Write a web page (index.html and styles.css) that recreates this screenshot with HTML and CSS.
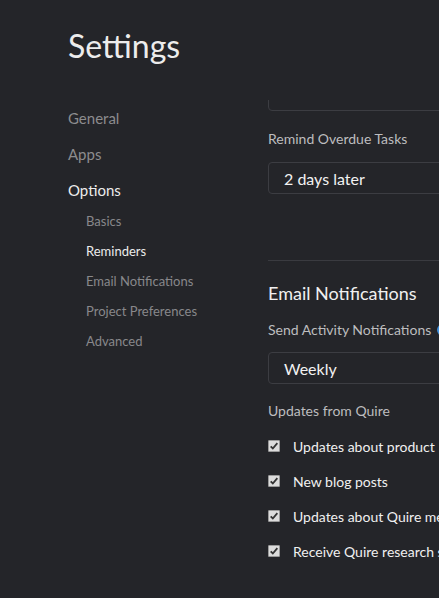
FILE: index.html
```html
<!DOCTYPE html>
<html lang="en">
<head>
<meta charset="utf-8">
<title>Settings</title>
<link rel="stylesheet" href="styles.css">
</head>
<body>
<header class="page-header">
  <h1 class="page-title">Settings</h1>
</header>
<div class="layout">
  <nav class="sidebar">
    <a class="nav-item">General</a>
    <a class="nav-item">Apps</a>
    <a class="nav-item is-active">Options</a>
    <div class="subnav">
      <a class="subnav-item">Basics</a>
      <a class="subnav-item is-active">Reminders</a>
      <a class="subnav-item">Email Notifications</a>
      <a class="subnav-item">Project Preferences</a>
      <a class="subnav-item">Advanced</a>
    </div>
  </nav>
  <main class="panel">
    <div class="panel-scroll">
      <div class="select select-first"><span class="select-value">Same day</span></div>

      <label class="field-label field-label-remind">Remind Overdue Tasks</label>
      <div class="select"><span class="select-value">2 days later</span></div>

      <hr class="divider">

      <h2 class="section-title">Email Notifications</h2>
      <label class="field-label field-label-send">Send Activity Notifications
        <svg class="info-icon" viewBox="0 0 12 12" width="12" height="12"><circle cx="6" cy="6" r="6" fill="#3f8fdc"/><rect x="5.2" y="5" width="1.6" height="4.2" fill="#242529"/><circle cx="6" cy="3.3" r="0.9" fill="#242529"/></svg>
      </label>
      <div class="select"><span class="select-value">Weekly</span></div>

      <div class="group-label">Updates from Quire</div>
      <ul class="check-list">
        <li class="check-row"><span class="checkbox"><svg viewBox="0 0 12 12" width="10" height="10"><path d="M2 6.4 L4.6 9 L10 2.6" fill="none" stroke="#333" stroke-width="2.2"/></svg></span><span class="check-text">Updates about product<span class="link">&amp; feature releases</span></span></li>
        <li class="check-row"><span class="checkbox"><svg viewBox="0 0 12 12" width="10" height="10"><path d="M2 6.4 L4.6 9 L10 2.6" fill="none" stroke="#333" stroke-width="2.2"/></svg></span><span class="check-text">New blog posts</span></li>
        <li class="check-row"><span class="checkbox"><svg viewBox="0 0 12 12" width="10" height="10"><path d="M2 6.4 L4.6 9 L10 2.6" fill="none" stroke="#333" stroke-width="2.2"/></svg></span><span class="check-text">Updates about Quire media coverage</span></li>
        <li class="check-row"><span class="checkbox"><svg viewBox="0 0 12 12" width="10" height="10"><path d="M2 6.4 L4.6 9 L10 2.6" fill="none" stroke="#333" stroke-width="2.2"/></svg></span><span class="check-text">Receive Quire research surveys</span></li>
      </ul>
    </div>
  </main>
</div>
</body>
</html>
```
FILE: styles.css
```css
html, body {
  margin: 0;
  padding: 0;
  height: 100%;
}

body {
  background: #242529;
  color: #e6e6e6;
  font-family: Lato, "Noto Sans", sans-serif;
  overflow: hidden;
  width: 439px;
}

.page-header {
  height: 100px;
  box-sizing: border-box;
  padding: 26px 0 0 68px;
}

.page-title {
  margin: 0;
  font-size: 32px;
  line-height: 40px;
  font-weight: 400;
  color: #ececec;
}

.layout {
  display: flex;
  height: 498px;
}

.sidebar {
  width: 268px;
  flex: none;
  box-sizing: border-box;
  padding: 8px 0 0 68px;
  display: flex;
  flex-direction: column;
  gap: 16px;
}

.nav-item {
  font-size: 15px;
  line-height: 20px;
  color: #8c8c8e;
}

.nav-item.is-active {
  color: #ececec;
}

.subnav {
  display: flex;
  flex-direction: column;
  gap: 10px;
  margin-top: -5px;
  padding-left: 18px;
}

.subnav-item {
  font-size: 13px;
  line-height: 20px;
  color: #88888b;
}

.subnav-item.is-active {
  color: #ececec;
}

.panel {
  flex: none;
  width: 460px;
  overflow: hidden;
}

.panel-scroll {
  margin-top: -21px;
  display: flex;
  flex-direction: column;
}

.select {
  height: 32px;
  box-sizing: border-box;
  border: 1px solid #3c3d42;
  border-radius: 4px;
  display: flex;
  align-items: center;
  padding-left: 15px;
  font-size: 16px;
  color: #f2f2f2;
  background: #242529;
}

.select-first .select-value {
  visibility: hidden;
}

.field-label {
  display: flex;
  align-items: center;
  gap: 6px;
  font-size: 14px;
  line-height: 20px;
  color: #bdbdbf;
  white-space: nowrap;
}

.field-label-remind {
  margin: 18px 0 13px;
}

.field-label-send {
  margin: 15px 0 12px;
}

.info-icon {
  flex: none;
}

.divider {
  border: 0;
  border-top: 1px solid #3a3b40;
  margin: 66px 0 0;
  height: 0;
}

.section-title {
  margin: 20px 0 0;
  font-size: 18px;
  line-height: 24px;
  font-weight: 400;
  color: #f0f0f0;
}

.group-label {
  margin-top: 17px;
  font-size: 14px;
  line-height: 20px;
  color: #bdbdbf;
}

.check-list {
  list-style: none;
  margin: 16px 0 0;
  padding: 0;
  display: flex;
  flex-direction: column;
  gap: 15px;
}

.check-row {
  display: flex;
  align-items: center;
  gap: 13px;
  font-size: 14px;
  line-height: 20px;
  color: #f0f0f0;
  white-space: nowrap;
}

.checkbox {
  flex: none;
  width: 12px;
  height: 12px;
  box-sizing: border-box;
  border-radius: 1px;
  background: #dcdcdc;
  border: 1px solid #9a9a9a;
  display: flex;
  align-items: center;
  justify-content: center;
  margin-bottom: 2px;
}

.link {
  color: #3f8fdc;
  margin-left: 5px;
}
```
